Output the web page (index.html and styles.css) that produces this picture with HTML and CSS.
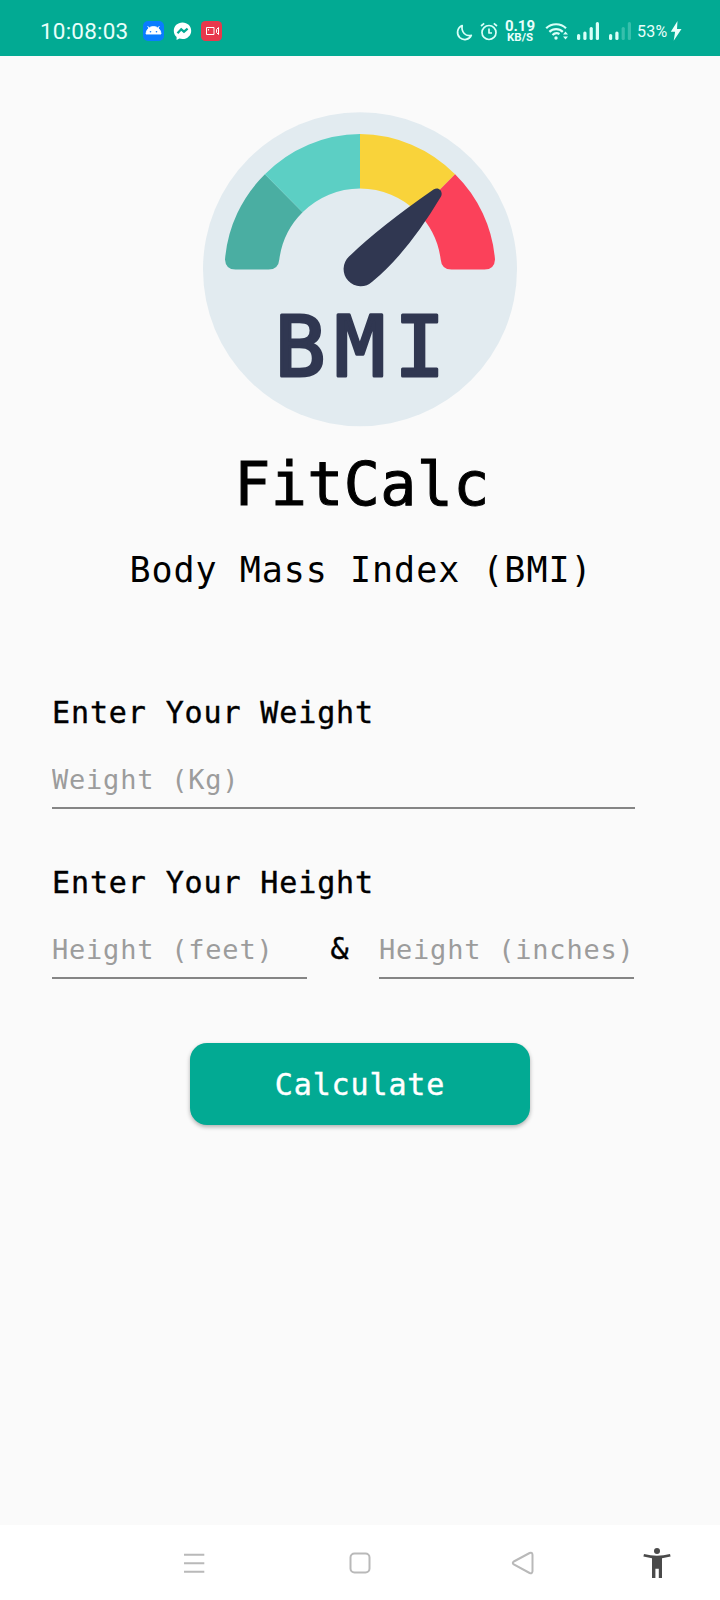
FILE: index.html
```html
<!DOCTYPE html>
<html lang="en">
<head>
<meta charset="utf-8">
<title>FitCalc</title>
<link rel="stylesheet" href="styles.css">
</head>
<body>
<div class="screen">
  <header class="status">
    <span class="clock">10:08:03</span>
    <svg class="apps" width="80" height="22" viewBox="0 0 80 22">
      <rect x="0" y="1" width="21" height="20" rx="5" fill="#0a7cff"/>
      <path d="M3 14a7.500 7.500 0 0 1 15 0zM6.200 9 4.700 6M14.800 9l1.500-3" fill="#fff" stroke="#fff" stroke-width=".9"/>
      <circle cx="7.500" cy="11.700" r=".8" fill="#0a7cff"/><circle cx="13.500" cy="11.700" r=".8" fill="#0a7cff"/>
      <path d="M39.500 2.500c-5 0-8.700 3.600-8.700 8.200 0 2.600 1 4.700 2.800 6.200v3l2.800-1.400c1 .3 2 .5 3.100.5 5 0 8.700-3.700 8.700-8.300s-3.700-8.200-8.700-8.200z" fill="#fff"/>
      <path d="m34.500 13.300 3.700-4 2.800 2.400 3.600-3" fill="none" stroke="#02aa93" stroke-width="2.200"/>
      <rect x="58" y="1" width="21" height="20" rx="4.500" fill="#e8384c"/>
      <path d="M63.500 7.500h7.500v7h-7.500zM73.500 9.500v3M73.500 9.500l2-2v7l-2-2" fill="none" stroke="#fff" stroke-width="1"/>
      <path d="M65.500 9v1.500" stroke="#fff"/>
    </svg>
    <svg class="glyph moon" width="17" height="17" viewBox="0 0 17 17"><path d="M6.200 1.500C.9 3.900.2 10.200 3.800 13.600c3.700 3.300 9.500 2.200 11.500-2.300C9.700 12.800 5 8.200 6.200 1.500z"/></svg>
    <svg class="glyph alarm" width="18" height="19" viewBox="0 0 18 19"><circle cx="9" cy="10.500" r="7"/><path d="M9 6.500V11h3M1 4l3.200-2.700M17 4l-3.200-2.700"/></svg>
    <span class="rate"><b>0.19</b><small>KB/S</small></span>
    <svg class="glyph wifi" width="24" height="19" viewBox="0 0 24 19"><path d="M1.200 6.300c5.400-5.400 14.400-5.400 19.800 0M4.400 9.900c3.700-3.700 9.700-3.700 13.400 0M7.500 13c2-2 4.700-2.300 7-1" stroke-width="2.200"/><circle cx="11" cy="16" r="1.700" class="dot"/><path class="dot" d="m20.500 9.500 2.500 3h-5zM20.500 17.500l2.500-3h-5z"/></svg>
    <svg class="bars first" width="23" height="18" viewBox="0 0 23 18"><rect y="12" width="3.200" height="6" rx="1.500"/><rect x="6.300" y="9.500" width="3.200" height="8.500" rx="1.500"/><rect x="12.600" y="5" width="3.200" height="13" rx="1.500"/><rect x="18.800" width="3.200" height="18" rx="1.500"/></svg>
    <svg class="bars" width="23" height="18" viewBox="0 0 23 18"><rect y="12" width="3.200" height="6" rx="1.500"/><rect x="6.300" y="9.500" width="3.200" height="8.500" rx="1.500"/><rect class="dim" x="12.600" y="5" width="3.200" height="13" rx="1.500"/><rect class="dim" x="18.800" width="3.200" height="18" rx="1.500"/></svg>
    <span class="battery">53%</span>
    <svg class="bolt" width="12" height="20" viewBox="0 0 12 20"><path d="M7.500 0 .8 10.800h4.300L3.700 19.800 11.500 8H7z"/></svg>
  </header>

  <main>
    <svg class="logo" width="314" height="315" viewBox="33 32.700 314 315">
      <circle cx="190" cy="190" r="157" fill="#e2ebf0"/>
      <g transform="translate(0 .8)">
        <path d="M94.900 94.200 132.600 132.200A81 81 0 0 0 109.300 179.500Q108.500 189.500 98.500 189.500H65.500Q55.500 189.500 55 179.500A135 135 0 0 1 94.900 94.200z" fill="#4aaea2"/>
        <path d="M190 54A135 135 0 0 0 94.900 94.200L132.600 132.200A81 81 0 0 1 190 108.500z" fill="#5ccfc4"/>
        <path d="M190 54A135 135 0 0 1 285.100 94.200L247.400 132.200A81 81 0 0 0 190 108.500z" fill="#f9d33a"/>
        <path d="M285.100 94.200 247.400 132.200A81 81 0 0 1 270.700 179.500Q271.500 189.500 281.500 189.500H314.500Q324.500 189.500 325 179.500A135 135 0 0 0 285.100 94.200z" fill="#fb415a"/>
        <path d="M179 176.500Q209.500 147 263.500 109.500C268.500 106 273.500 111 271 116.500Q238 172 202.500 201.500A17 17 0 1 1 179 176.500z" fill="#303751"/>
      </g>
      <text class="logo-text" x="104.800" y="296.800">BMI</text>
    </svg>
    <h1>FitCalc</h1>
    <p class="subtitle">Body Mass Index (BMI)</p>

    <form class="form">
      <label for="weight">Enter Your Weight</label>
      <input id="weight" type="text" placeholder="Weight (Kg)">
      <label class="second" for="feet">Enter Your Height</label>
      <div class="row">
        <input id="feet" type="text" placeholder="Height (feet)">
        <span class="amp">&amp;</span>
        <input id="inches" type="text" placeholder="Height (inches)">
      </div>
      <button type="button">Calculate</button>
    </form>
  </main>

  <nav>
    <svg width="720" height="75" viewBox="0 0 720 75">
      <g fill="none" stroke="#b9b9b9" stroke-width="2">
        <path d="M184 29.700h20.300M184 38.300h20.300M184 46.800h20.300"/>
        <rect x="350.500" y="28.500" width="19" height="19" rx="4"/>
        <path d="M513.800 36.500 529.600 28q2.600-1 2.900 1.800v16.400q-.3 2.800-2.900 1.800l-15.800-8.500q-2-1.500 0-3z"/>
      </g>
      <g fill="#4a4a4a"><circle cx="657" cy="26" r="3"/><path d="M644 29q13 3.500 26 0l.6 2.600-8.600 1.700V53h-3.200v-9.200h-3.400V53H652V33.300l-8.600-1.700z"/></g>
    </svg>
  </nav>
</div>
</body>
</html>
```
FILE: styles.css
```css
* { box-sizing: border-box; }
body { margin: 0; background: #fafafa; }
.screen {
  width: 720px;
  height: 1600px;
  display: flex;
  flex-direction: column;
  overflow: hidden;
  font-family: "DejaVu Sans Mono", monospace;
  color: #000;
}

.status {
  height: 56px;
  flex: none;
  display: flex;
  align-items: center;
  padding: 6px 38px 0 40px;
  background: #02aa93;
  color: #e9fffb;
  font-family: Roboto, sans-serif;
}
.clock { width: 103px; font-size: 22.500px; letter-spacing: .2px; white-space: nowrap; }
.apps { flex: none; }
.glyph { flex: none; fill: none; stroke: #d9fff8; stroke-width: 1.700; stroke-linejoin: round; }
.glyph .dot { fill: #d9fff8; stroke: none; }
.moon { margin: 2px 0 0 233px; }
.alarm { margin: 1px 0 0 7px; }
.rate {
  width: 32px;
  margin: 1px 0 0 6px;
  display: flex;
  flex-direction: column;
  align-items: center;
}
.rate b { font-size: 15px; line-height: 12px; }
.rate small { font-size: 11.500px; line-height: 11px; font-weight: 700; }
.wifi { margin-left: 9px; }
.bars { flex: none; fill: #d9fff8; margin-left: 9px; }
.bars.first { margin-left: 8px; }
.bars .dim { opacity: .25; }
.battery { width: 32px; margin-left: 5px; font-size: 16px; letter-spacing: .3px; }
.bolt { flex: none; margin-left: 1px; fill: #e9fffb; }

main { flex: 1; display: flex; flex-direction: column; align-items: center; }
.logo { flex: none; margin-top: 56px; }
.logo-text {
  font-size: 84.500px;
  letter-spacing: 8.800px;
  fill: #303751;
  stroke: #303751;
  stroke-width: 3;
  stroke-linejoin: round;
}
h1 {
  margin: 22px 0 0 4px;
  font-size: 60px;
  line-height: 70px;
  font-weight: 400;
  letter-spacing: .4px;
  -webkit-text-stroke: 1px #000;
}
.subtitle {
  margin: 30px 0 0 2px;
  font-size: 35px;
  line-height: 42px;
  letter-spacing: .980px;
}

.form {
  width: 583px;
  margin: 102px 0 0 52px;
  align-self: flex-start;
  display: flex;
  flex-direction: column;
}
label, .amp, button { font-size: 30px; -webkit-text-stroke: .4px currentColor; letter-spacing: .880px; }
label { line-height: 40px; }
label.second { margin-top: 54px; }
input {
  display: block;
  width: 100%;
  height: 76px;
  padding: 19px 0 0;
  border: 0;
  border-bottom: 2px solid #858585;
  border-radius: 0;
  background: transparent;
  outline: none;
  font: 27px "DejaVu Sans Mono", monospace;
  letter-spacing: .780px;
}
input::placeholder { color: #9c9c9c; opacity: 1; }
.row { display: grid; grid-template-columns: 255px 72px 255px; align-items: center; }
.amp { text-align: center; padding-top: 15px; margin-left: -6px; }
button {
  width: 340px;
  height: 82px;
  margin: 64px 0 0 138px;
  padding: 0;
  border: 0;
  border-radius: 17px;
  background: #02aa93;
  box-shadow: 0 2px 4px rgba(0, 0, 0, .3);
  color: #fff;
  font-family: inherit;
}

nav { flex: none; height: 75px; background: #fff; }
nav svg { display: block; }
```
